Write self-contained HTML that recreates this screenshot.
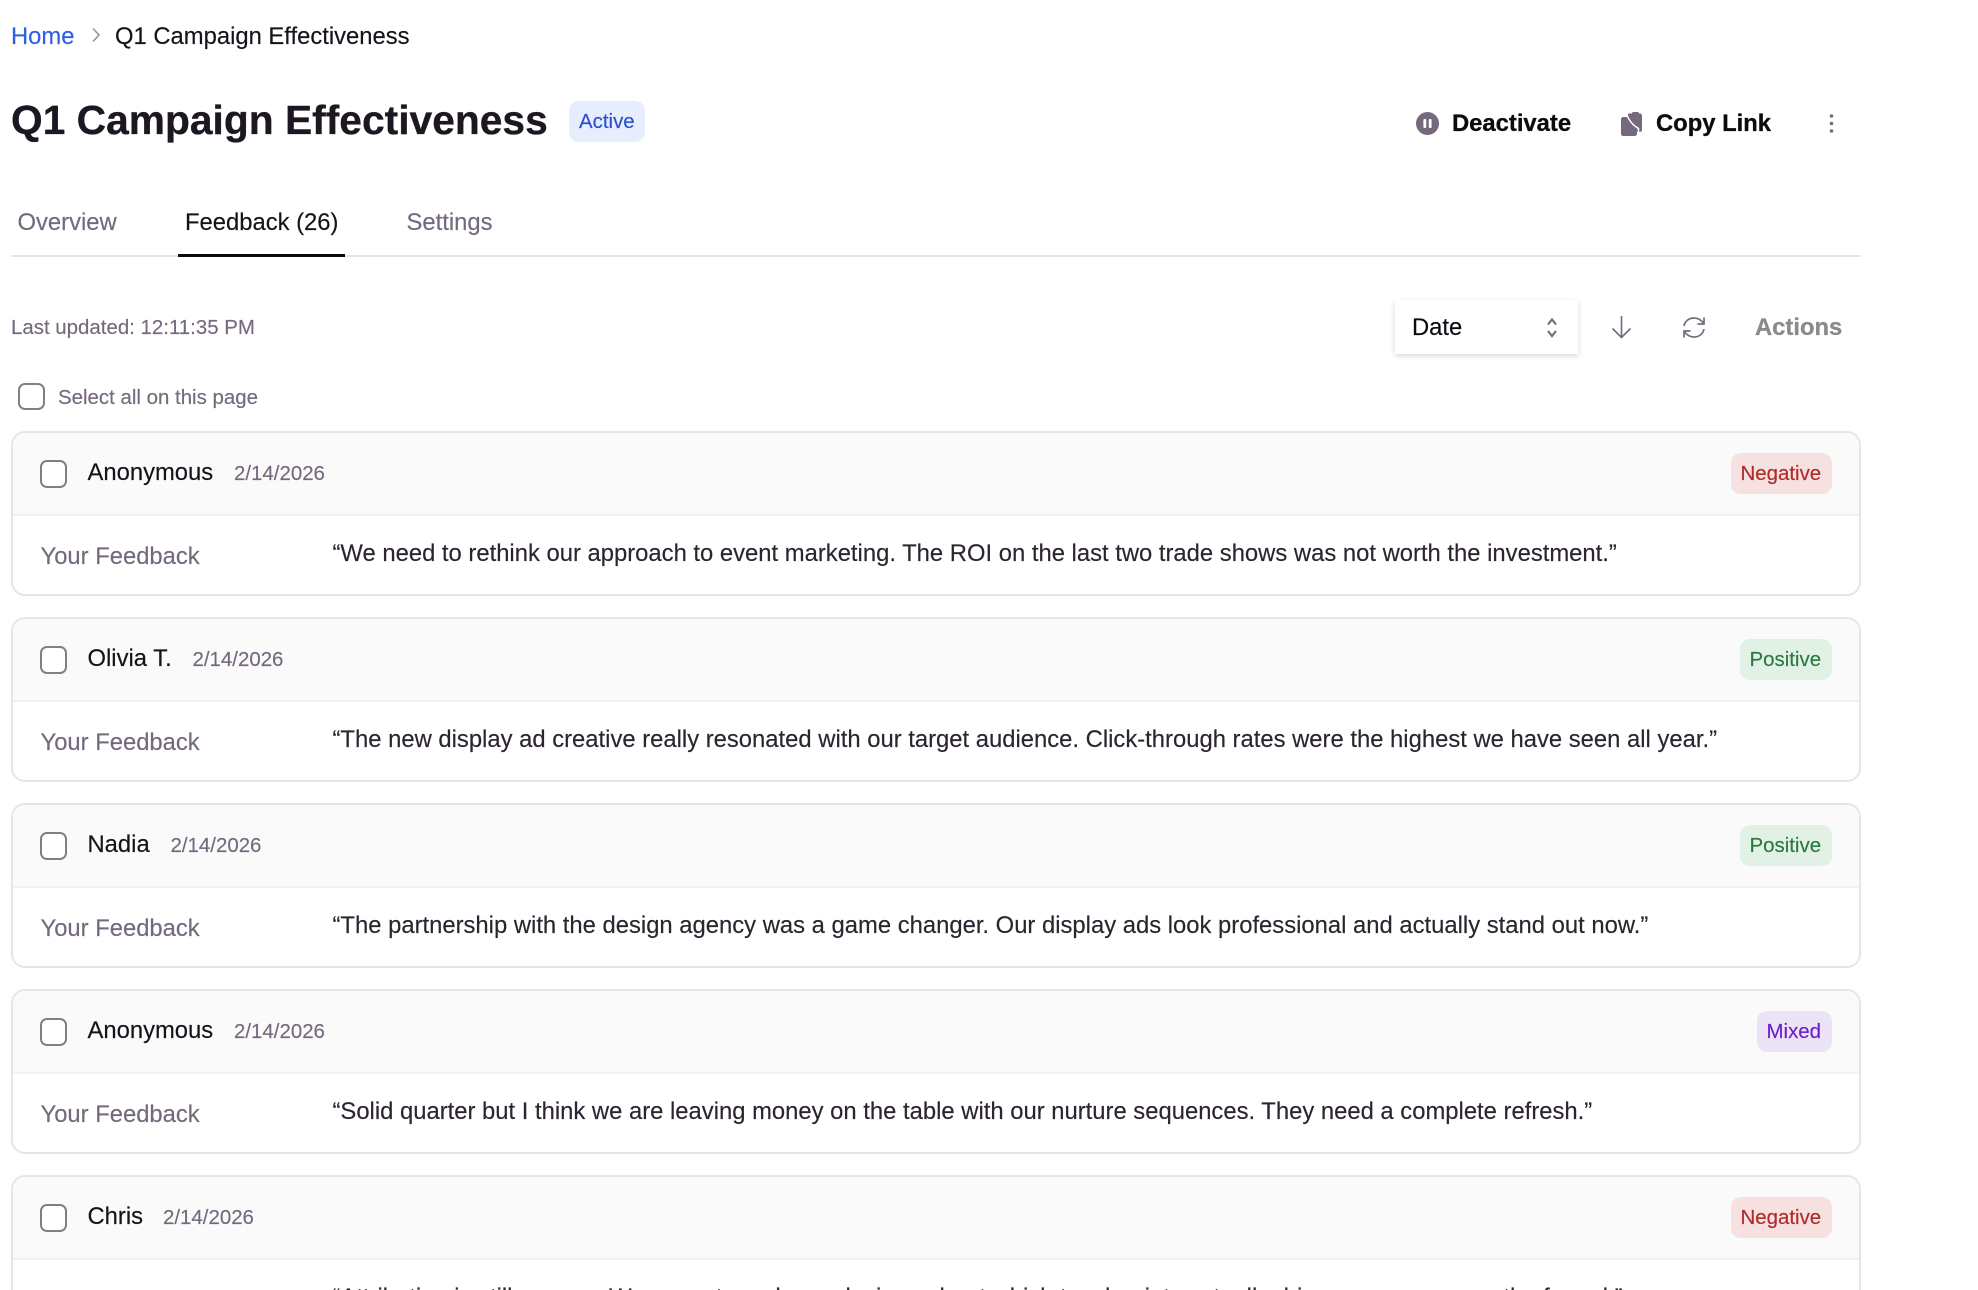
<!DOCTYPE html>
<html lang="en">
<head>
<meta charset="utf-8">
<title>Q1 Campaign Effectiveness</title>
<style>
html,body{margin:0;padding:0;background:#fff;width:1978px;height:1290px;overflow:hidden;}
#page{position:relative;width:1978px;height:1290px;overflow:hidden;font-family:"Liberation Sans",Arial,sans-serif;color:#16121a;background:#fff;-webkit-text-stroke:.15px currentColor;}
.t{position:absolute;line-height:1;white-space:nowrap;}
.g{color:#75697d;}
.s{font-size:20.45px;}
.m{font-size:23.8px;}
.b{font-weight:700;color:#0d0a10;-webkit-text-stroke:.3px currentColor;}
.card{position:absolute;left:11px;width:1850px;height:165px;box-sizing:border-box;border:2px solid #e6e6e6;border-radius:14px;overflow:hidden;background:#fff;}
.head{position:absolute;left:0;top:0;right:0;height:81px;background:#fafafa;border-bottom:2px solid #f1f1f1;}
.cb{position:absolute;box-sizing:border-box;width:27px;height:27px;border:2px solid #808080;border-radius:7px;background:#fff;}
.card .cb{left:27px;top:27px;height:28px;}
.badge{position:absolute;top:19.500px;height:41px;border-radius:10px;}
.badge span{position:absolute;top:11.700px;left:9.500px;font-size:20.45px;line-height:1;white-space:nowrap;}
.neg{right:27px;width:101px;background:#f6e0e0;color:#b02a2a;}
.pos{right:27px;width:92px;background:#e2f1e5;color:#2a7a3f;}
.mix{right:27px;width:75px;background:#ece3f8;color:#6a1fc9;}
.name{left:74.500px;top:28.300px;}
.date{top:31.200px;}
.lab{left:27.500px;top:112.300px;}
.quote{color:#2c2530;font-size:23.82px;left:319.500px;top:108.600px;}
svg{position:absolute;display:block;}
</style>
</head>
<body>
<div id="page">
<div class="t m" style="left:11px;top:25px;color:#2f5fe8;">Home</div>
<svg style="left:90px;top:26px" width="12" height="18" viewBox="0 0 12 18" fill="none" stroke="#9a929f" stroke-width="1.6"><path d="M3 2.500l6 6.500-6 6.500"/></svg>
<div class="t m" style="left:115px;top:25px;">Q1 Campaign Effectiveness</div>

<div class="t b" style="left:11px;top:99.500px;font-size:40.75px;color:#1c1720;">Q1 Campaign Effectiveness</div>
<div style="position:absolute;left:569px;top:101px;width:76px;height:41px;background:#e6edfd;border-radius:10px;"></div>
<div class="t s" style="left:579px;top:112px;color:#2b4fd1;">Active</div>

<svg style="left:1416px;top:112px" width="23" height="23" viewBox="0 0 23 23"><circle cx="11.500" cy="11.500" r="11.500" fill="#75697d"/><rect x="7.400" y="7" width="2.800" height="9" rx="1" fill="#fff"/><rect x="12.800" y="7" width="2.800" height="9" rx="1" fill="#fff"/></svg>
<div class="t m b" style="left:1452px;top:112px;">Deactivate</div>
<svg style="left:1621px;top:112px" width="22" height="24" viewBox="0 0 22 24"><path d="M7 1.500H18.500Q21 1.500 21 4V17.500Q21 20 18.500 20H7Z" fill="#75697d"/><rect x="11" y="0" width="7" height="3" rx="1.500" fill="#75697d"/><path d="M2.500 5H7C9.500 9.500 12.500 13 16 15V21.500C16 23 15 24 13.500 24H2.500C1 24 0 23 0 21.500V7.500C0 6 1 5 2.500 5Z" fill="#75697d"/><path d="M6 3.500C8.500 9 12 13.500 17.500 16.500V24" fill="none" stroke="#fff" stroke-width="1.500"/></svg>
<div class="t m b" style="left:1656px;top:112px;">Copy Link</div>
<svg style="left:1828px;top:113px" width="8" height="22" viewBox="0 0 8 22" fill="#75697d"><circle cx="3.500" cy="3" r="1.800"/><circle cx="3.500" cy="10.500" r="1.800"/><circle cx="3.500" cy="18" r="1.800"/></svg>

<div class="t m g" style="left:17.500px;top:211.400px;">Overview</div>
<div class="t m" style="left:185px;top:211.400px;">Feedback (26)</div>
<div class="t m g" style="left:406.500px;top:211.400px;">Settings</div>
<div style="position:absolute;left:11px;top:255px;width:1850px;height:2px;background:#e5e5e5;"></div>
<div style="position:absolute;left:178px;top:254px;width:167px;height:3px;background:#0d0a10;"></div>

<div class="t s g" style="left:11px;top:318.200px;">Last updated: 12:11:35 PM</div>
<div style="position:absolute;left:1395px;top:300px;width:183px;height:54px;background:#fff;box-shadow:0 2px 5px rgba(0,0,0,.16);"></div>
<div class="t m" style="left:1412px;top:316.200px;color:#0d0a10;">Date</div>
<svg style="left:1545px;top:316px" width="14" height="23" viewBox="0 0 14 23" fill="none" stroke="#75697d" stroke-width="2.200"><path d="M3 8.500l4-5 4 5"/><path d="M3 15l4 5 4-5"/></svg>
<svg style="left:1610px;top:315px" width="23" height="24" viewBox="0 0 23 24" fill="none" stroke="#75697d" stroke-width="1.600"><path d="M11.500 1v21.500"/><path d="M2.500 13.500l9 9 9-9"/></svg>
<svg style="left:1681px;top:315px" width="26" height="25" viewBox="0 0 26 25" fill="none" stroke="#75697d" stroke-width="1.700"><path d="M3 11C4 6 8 3 13 3c4 0 7 2 9.500 5"/><path d="M23 2.500v6.500h-6.500"/><path d="M23 14c-1 5-5 8-10 8-4 0-7-2-9.500-5"/><path d="M3 22.500V16h6.500"/></svg>
<div class="t m b" style="left:1755px;top:316.200px;color:#8a8a8a;">Actions</div>

<div class="cb" style="left:18px;top:383px;"></div>
<div class="t s g" style="left:58px;top:388.200px;">Select all on this page</div>

<div class="card" style="top:431px;">
  <div class="head"></div>
  <div class="cb"></div>
  <div class="t m name">Anonymous</div>
  <div class="t s g date" style="left:221px;">2/14/2026</div>
  <div class="badge neg"><span>Negative</span></div>
  <div class="t m g lab">Your Feedback</div>
  <div class="t quote">“We need to rethink our approach to event marketing. The ROI on the last two trade shows was not worth the investment.”</div>
</div>

<div class="card" style="top:617px;">
  <div class="head"></div>
  <div class="cb"></div>
  <div class="t m name">Olivia T.</div>
  <div class="t s g date" style="left:179.500px;">2/14/2026</div>
  <div class="badge pos"><span>Positive</span></div>
  <div class="t m g lab">Your Feedback</div>
  <div class="t quote">“The new display ad creative really resonated with our target audience. Click-through rates were the highest we have seen all year.”</div>
</div>

<div class="card" style="top:803px;">
  <div class="head"></div>
  <div class="cb"></div>
  <div class="t m name">Nadia</div>
  <div class="t s g date" style="left:157.500px;">2/14/2026</div>
  <div class="badge pos"><span>Positive</span></div>
  <div class="t m g lab">Your Feedback</div>
  <div class="t quote">“The partnership with the design agency was a game changer. Our display ads look professional and actually stand out now.”</div>
</div>

<div class="card" style="top:989px;">
  <div class="head"></div>
  <div class="cb"></div>
  <div class="t m name">Anonymous</div>
  <div class="t s g date" style="left:221px;">2/14/2026</div>
  <div class="badge mix"><span>Mixed</span></div>
  <div class="t m g lab">Your Feedback</div>
  <div class="t quote">“Solid quarter but I think we are leaving money on the table with our nurture sequences. They need a complete refresh.”</div>
</div>

<div class="card" style="top:1175px;">
  <div class="head"></div>
  <div class="cb"></div>
  <div class="t m name">Chris</div>
  <div class="t s g date" style="left:150px;">2/14/2026</div>
  <div class="badge neg"><span>Negative</span></div>
  <div class="t m g lab">Your Feedback</div>
  <div class="t quote">“Attribution is still a mess. We cannot reach conclusions about which touchpoints actually drive revenue across the funnel.”</div>
</div>
</div>
</body>
</html>
